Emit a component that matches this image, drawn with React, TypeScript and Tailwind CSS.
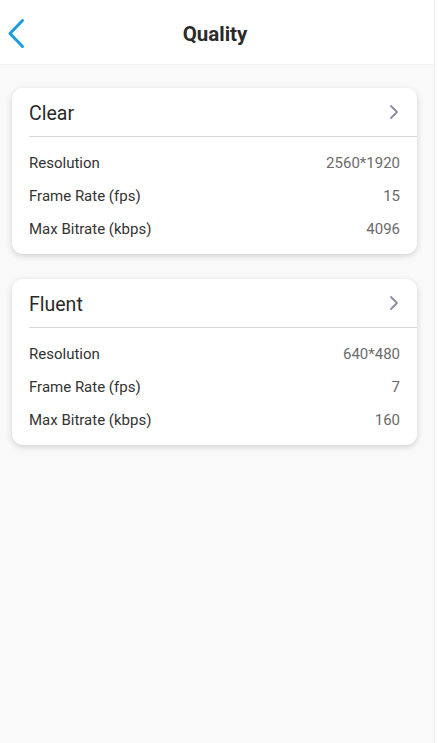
import React from "react";

type Row = { label: string; value: string };
const cards: { title: string; rows: Row[] }[] = [
  {
    title: "Clear",
    rows: [
      { label: "Resolution", value: "2560*1920" },
      { label: "Frame Rate (fps)", value: "15" },
      { label: "Max Bitrate (kbps)", value: "4096" },
    ],
  },
  {
    title: "Fluent",
    rows: [
      { label: "Resolution", value: "640*480" },
      { label: "Frame Rate (fps)", value: "7" },
      { label: "Max Bitrate (kbps)", value: "160" },
    ],
  },
];

export default function App() {
  return (
    <div className="flex w-[438px] h-[743px] bg-[#f9f9f9] overflow-hidden" style={{ fontFamily: "Roboto, 'Noto Sans', sans-serif" }}>
      <div className="flex flex-col w-[435px] border-r border-[#ececec]">
        <div className="relative h-[65px] bg-white border-b border-[#f1f1f1] flex items-center justify-center shrink-0">
          <svg className="absolute left-[7px] top-[18px]" width="18" height="31" viewBox="0 0 18 31" fill="none">
            <path d="M15.5 2.5 L3 15.5 L15.5 28.5" stroke="#1a9ae0" strokeWidth="3" strokeLinecap="round" strokeLinejoin="round" />
          </svg>
          <span className="text-[20.5px] font-bold text-[#2b2b2b] mt-[5px] ml-[-4px]">Quality</span>
        </div>
        <div className="flex flex-col gap-[25px] pt-[23px] pl-[12px] pr-[17px]">
          {cards.map((c) => (
            <div key={c.title} className="bg-white rounded-[11px] shadow-[0_2px_6px_rgba(0,0,0,0.16)] pl-[17px]">
              <div className="flex items-center justify-between h-[49px] pr-[18px] border-b border-[#d6d6da]">
                <span className="text-[19.5px] text-[#2a2a2a] mt-[4px]">{c.title}</span>
                <svg width="10" height="16" viewBox="0 0 10 16" fill="none">
                  <path d="M2 2 L8 8 L2 14" stroke="#8a8d9f" strokeWidth="1.8" strokeLinecap="round" strokeLinejoin="round" />
                </svg>
              </div>
              <div className="pt-[10px] pb-[8px] pr-[17px]">
                {c.rows.map((r) => (
                  <div key={r.label} className="flex items-center justify-between h-[33px] text-[15px]">
                    <span className="text-[#333333]">{r.label}</span>
                    <span className="text-[#6b6b6b]">{r.value}</span>
                  </div>
                ))}
              </div>
            </div>
          ))}
        </div>
      </div>
      <div className="flex-1 bg-white" />
    </div>
  );
}
